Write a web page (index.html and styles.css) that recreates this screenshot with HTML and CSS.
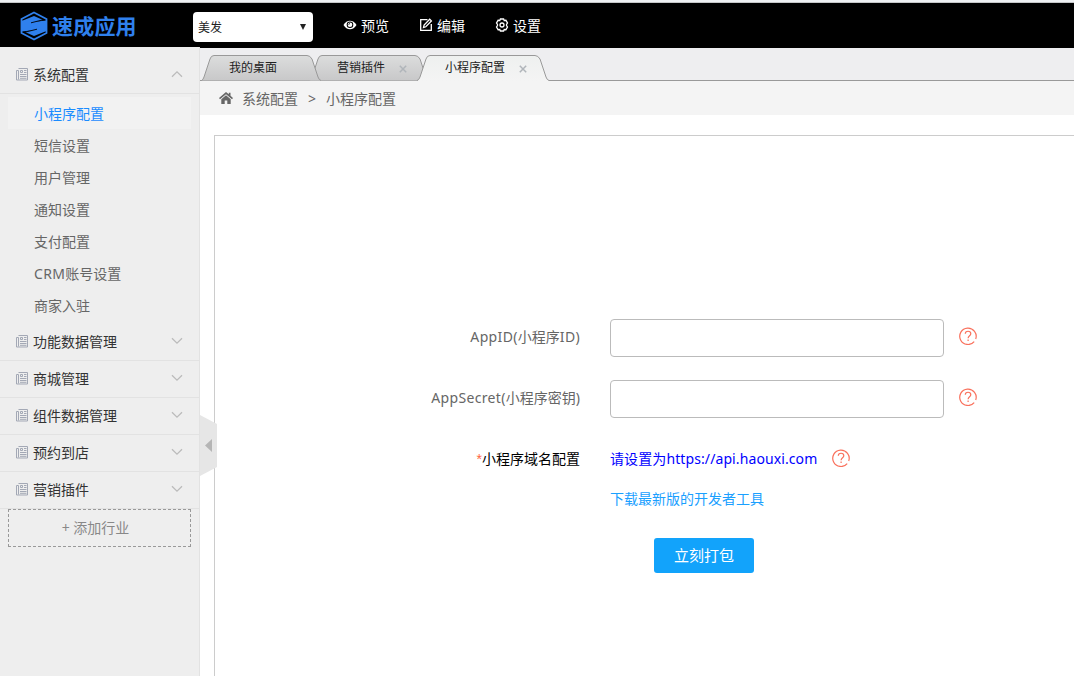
FILE: index.html
```html
<!DOCTYPE html>
<html lang="zh-CN">
<head>
  <meta charset="UTF-8">
  <meta name="viewport" content="width=device-width, initial-scale=1.0">
  <title>速成应用 - 小程序配置</title>
  <link rel="stylesheet" href="styles.css">
</head>
<body>

  <!-- 公用图标 -->
  <svg class="defs" width="0" height="0">
    <symbol id="icon-news" viewBox="0 0 13 13">
      <path d="M3.5.5h9v11.500h-11v-9.500h2M3.500 2.500v9" />
      <path d="M5.500 2.500h2v2h-2zM9 2.500h2.500M9 4.500h2.500M5 6.500h6.500M5 8.500h6.500M5 10.300h6.500" />
    </symbol>
    <symbol id="icon-down" viewBox="0 0 12 8">
      <path d="M1 1.200l5 5 5-5" />
    </symbol>
    <symbol id="icon-help" viewBox="0 0 18 18">
      <path d="M15.200 14.600A8.200 8.200 0 1 1 16.700 12M14.200 15.400a8.200 8.200 0 0 1-1.200.8" />
      <path d="M6.300 6.800c0-3.400 5.500-3.400 5.500 0 0 2-2.700 2-2.700 4.500M9.100 12.600v1.300" />
    </symbol>
  </svg>

  <!-- 顶部 -->
  <div class="header">
    <div class="logo">
      <svg width="28" height="30" viewBox="0 0 28 30">
        <path d="M14 1.500L26.500 8v14L14 28.500 1.500 22V8z" fill="none" stroke="#2f80ed" stroke-width="1.800"/>
        <path d="M1.500 10L14 5l9 4-11 3 8 5.500-4.500 1.500L1.500 20.500z" fill="#2f80ed"/>
        <path d="M26.500 20L14 25l-9-4 11-3-8-5.500 4.500-1.500 14-1.500z" fill="#2f80ed"/>
        <path d="M11 11.800l12-3M17 18.200l-12 3" stroke="#000" stroke-width=".9"/>
      </svg>
      <span>速成应用</span>
    </div>
    <div class="select"><span>美发</span><i></i></div>
    <div class="nav">
      <a class="nav-item">
        <svg width="14" height="12" viewBox="0 0 14 12">
          <path d="M.5 6C3.500.3 10.500.3 13.500 6 10.500 11.700 3.500 11.700.5 6z" fill="#fff"/>
          <circle cx="7" cy="5.800" r="3.300" fill="#000"/>
          <circle cx="7" cy="5.800" r="2.300" fill="#fff"/>
          <path d="M5.700 5.800A1.300 1.300 0 0 1 7 4.500" fill="none" stroke="#000" stroke-width=".8"/>
        </svg>
        <span>预览</span>
      </a>
      <a class="nav-item nav-edit">
        <svg width="14" height="14" viewBox="0 0 14 14" fill="none" stroke="#fff" stroke-width="1.300">
          <path d="M8.500 1.700H1.700v10.600h10.600V6"/>
          <path d="M4.500 9.500l.6-2.500 5.600-5.800 1.700 1.700L6.800 8.800z"/>
        </svg>
        <span>编辑</span>
      </a>
      <a class="nav-item">
        <svg width="14" height="14" viewBox="0 0 14 14" fill="none" stroke="#fff" stroke-width="1.300">
          <path d="M5.400 1h3.200l.6 1.500 1.700-.2 1.600 2.700-1 1.500v1l1 1.500-1.600 2.700-1.700-.2L8.600 13H5.400l-.6-1.500-1.700.2L1.500 9l1-1.500v-1L1.500 5l1.600-2.700 1.700.2z"/>
          <circle cx="7" cy="7" r="2"/>
        </svg>
        <span>设置</span>
      </a>
    </div>
  </div>

  <div class="wrap">
    <!-- 左侧菜单 -->
    <div class="sidebar">
      <div class="menu-title">
        <svg class="news"><use href="#icon-news"/></svg><span>系统配置</span>
        <svg class="arrow up"><use href="#icon-down"/></svg>
      </div>
      <ul class="submenu">
        <li class="active">小程序配置</li>
        <li>短信设置</li>
        <li>用户管理</li>
        <li>通知设置</li>
        <li>支付配置</li>
        <li><span class="latin">CRM</span>账号设置</li>
        <li>商家入驻</li>
      </ul>
      <div class="menu-title">
        <svg class="news"><use href="#icon-news"/></svg><span>功能数据管理</span>
        <svg class="arrow"><use href="#icon-down"/></svg>
      </div>
      <div class="menu-title">
        <svg class="news"><use href="#icon-news"/></svg><span>商城管理</span>
        <svg class="arrow"><use href="#icon-down"/></svg>
      </div>
      <div class="menu-title">
        <svg class="news"><use href="#icon-news"/></svg><span>组件数据管理</span>
        <svg class="arrow"><use href="#icon-down"/></svg>
      </div>
      <div class="menu-title">
        <svg class="news"><use href="#icon-news"/></svg><span>预约到店</span>
        <svg class="arrow"><use href="#icon-down"/></svg>
      </div>
      <div class="menu-title">
        <svg class="news"><use href="#icon-news"/></svg><span>营销插件</span>
        <svg class="arrow"><use href="#icon-down"/></svg>
      </div>
      <div class="add">+ 添加行业</div>
      <svg class="toggle" width="18" height="62" viewBox="0 0 18 62">
        <path d="M0 0l17 9v43L0 61z" fill="#e6e6e6"/>
        <path d="M12 24v13l-7-6.500z" fill="#b5b5b5"/>
      </svg>
    </div>

    <!-- 右侧内容 -->
    <div class="main">
      <div class="tabs">
        <div class="tab tab-home">
          <svg class="tab-bg" width="120" height="26" viewBox="0 0 120 26">
            <linearGradient id="gray" x1="0" y1="0" x2="0" y2="1">
              <stop offset="0" stop-color="#dcdddd"/><stop offset="1" stop-color="#c8c8c9"/>
            </linearGradient>
            <path d="M.5 25.500Q2 25 3 22L9 4Q10 .5 13 .5H106Q109 .5 111 4L117 22Q118 25 120 25.500" fill="url(#gray)" stroke="#999"/>
          </svg>
          <span>我的桌面</span>
        </div>
        <div class="tab tab-plugin">
          <svg class="tab-bg" width="120" height="26" viewBox="0 0 120 26">
            <path d="M.5 25.500Q2 25 3 22L9 4Q10 .5 13 .5H106Q109 .5 111 4L117 22Q118 25 120 25.500" fill="url(#gray)" stroke="#999"/>
          </svg>
          <span>营销插件</span>
          <svg class="close" width="8" height="8" viewBox="0 0 8 8"><path d="M.8.8l6.400 6.400M7.200.8L.8 7.200"/></svg>
        </div>
        <div class="tab tab-current">
          <svg class="tab-bg" width="132" height="26" viewBox="0 0 132 26">
            <linearGradient id="light" x1="0" y1="0" x2="0" y2="1">
              <stop offset="0" stop-color="#eef0ef"/><stop offset="1" stop-color="#f4f4f4"/>
            </linearGradient>
            <path d="M0 26.500Q2 25 3 22L9 4Q10 .5 13 .5H118Q121 .5 123 4L129 22Q130 25 132 25.500V26.500z" fill="url(#light)"/>
            <path d="M0 25.500Q2 25 3 22L9 4Q10 .5 13 .5H118Q121 .5 123 4L129 22Q130 25 132 25.500" fill="none" stroke="#999"/>
          </svg>
          <span>小程序配置</span>
          <svg class="close" width="8" height="8" viewBox="0 0 8 8"><path d="M.8.8l6.400 6.400M7.200.8L.8 7.200"/></svg>
        </div>
      </div>

      <div class="crumbs">
        <svg width="14" height="12" viewBox="0 0 14 12" fill="#666">
          <path d="M7 0L0 6l1 1.200 6-5 6 5L14 6l-2.500-2.200V.8H9.800v1.500z"/>
          <path d="M7 3.300L2.300 7.200V12h3.400V8.500h2.600V12h3.400V7.200z"/>
        </svg>
        <span>系统配置</span><span class="sep">&gt;</span><span>小程序配置</span>
      </div>

      <div class="panel">
        <div class="row">
          <label for="appid"><span class="latin">AppID(</span>小程序<span class="latin">ID)</span></label>
          <input type="text" id="appid">
          <svg class="help"><use href="#icon-help"/></svg>
        </div>
        <div class="row">
          <label for="secret"><span class="latin">AppSecret(</span>小程序密钥)</label>
          <input type="text" id="secret">
          <svg class="help"><use href="#icon-help"/></svg>
        </div>
        <div class="row row-domain">
          <label><em>*</em>小程序域名配置</label>
          <span class="domain">请设置为https://api.haouxi.com</span>
          <svg class="help"><use href="#icon-help"/></svg>
        </div>
        <a class="download">下载最新版的开发者工具</a>
        <button class="submit">立刻打包</button>
      </div>
    </div>
  </div>

</body>
</html>
```
FILE: styles.css
```css
* {
  box-sizing: border-box;
}

body {
  margin: 0;
  height: 676px;
  overflow: hidden;
  font-family: "Noto Sans", "Noto Sans CJK SC", sans-serif;
  font-size: 14px;
  line-height: 20px;
  color: #666;
  background: #fff;
}

svg {
  flex: none;
}

.defs {
  position: absolute;
}

.latin {
  letter-spacing: 0.35px;
}

/* 顶部 */
.header {
  display: flex;
  align-items: flex-start;
  height: 48px;
  background: #000;
  border-top: 2px solid #eef0f3;
  box-shadow: inset 0 1px 0 #c4c6c8;
}

.logo {
  display: flex;
  align-items: center;
  width: 193px;
  height: 48px;
  padding-left: 20px;
  color: #2f80ed;
  font-size: 21px;
  font-weight: 700;
  letter-spacing: 0.2px;
}

.logo span {
  margin-left: 4px;
}

.select {
  display: flex;
  align-items: center;
  justify-content: space-between;
  width: 120px;
  height: 30px;
  margin-top: 10px;
  padding: 1px 7px 0 5px;
  border-radius: 4px;
  background: #fff;
  color: #222;
  font-size: 12px;
}

.select i {
  margin-top: -2px;
  border: 3px solid transparent;
  border-top: 6px solid #222;
  border-bottom: 0;
}

.nav {
  display: flex;
  gap: 30px;
  margin: 14px 0 0 30px;
  color: #fff;
}

.nav-item {
  display: flex;
  align-items: center;
  gap: 4px;
}

.nav-item svg {
  margin-top: -2px;
}

.wrap {
  display: flex;
  height: 628px;
}

/* 左侧菜单 */
.sidebar {
  position: relative;
  flex: none;
  width: 200px;
  height: 629px;
  margin-top: -1px;
  padding-top: 10px;
  background: #eee;
  border-right: 1px solid #e2e2e2;
}

.menu-title {
  display: flex;
  align-items: center;
  height: 37px;
  padding: 0 16px 0 15px;
  border-bottom: 1px solid #e2e2e2;
  color: #333;
}

.news {
  width: 13px;
  height: 13px;
  margin: -2px 5px 0 0;
  fill: none;
  stroke: #a3a8b5;
}

.arrow {
  width: 12px;
  height: 8px;
  margin: -3px 0 0 auto;
  fill: none;
  stroke: #bbb;
  stroke-width: 1.3;
}

.arrow.up {
  transform: rotate(180deg);
}

.submenu {
  list-style: none;
  margin: 0;
  padding: 3px 8px;
}

.submenu li {
  height: 32px;
  padding: 1px 0 0 26px;
  line-height: 32px;
}

.submenu .active {
  background: #f2f2f2;
  color: #1a8cff;
}

.add {
  height: 38px;
  margin: 0 8px;
  padding-right: 8px;
  border: 1px dashed #999;
  line-height: 36px;
  text-align: center;
  color: #888;
}

.toggle {
  position: absolute;
  left: 200px;
  top: 368px;
}

/* 标签页 */
.main {
  flex: 1;
  min-width: 0;
}

.tabs {
  display: flex;
  align-items: flex-end;
  height: 33px;
  padding-left: 1px;
  background: linear-gradient(#999, #999) 0 100% / 100% 1px no-repeat #eeeef0;
}

.tab {
  position: relative;
  display: flex;
  align-items: center;
  width: 120px;
  height: 26px;
  padding-left: 28px;
  font-size: 12px;
  color: #222;
}

.tab span {
  position: relative;
}

.tab-bg {
  position: absolute;
  left: 0;
  top: 0;
}

.tab-home {
  z-index: 2;
}

.tab-plugin {
  z-index: 1;
  margin-left: -12px;
}

.tab-current {
  z-index: 3;
  width: 132px;
  margin-left: -12px;
}

.close {
  position: relative;
  margin: 1px 0 0 14px;
  stroke: #b0b5ba;
  stroke-width: 1.5;
}

.crumbs {
  display: flex;
  align-items: center;
  height: 34px;
  padding: 2px 0 0 19px;
  background: #f4f4f4;
}

.crumbs svg {
  margin: -2px 9px 0 0;
}

.crumbs .sep {
  width: 28px;
  text-align: center;
}

/* 表单 */
.panel {
  height: 560px;
  margin: 20px 0 0 14px;
  padding-top: 183px;
  border: 1px solid #ccc;
  border-right: 0;
}

.row {
  display: flex;
  align-items: center;
  height: 38px;
  margin-bottom: 23px;
}

.row label {
  width: 365px;
  margin: -3px 30px 0 0;
  text-align: right;
}

.row input {
  width: 334px;
  height: 38px;
  padding: 0 10px;
  border: 1px solid #bbb;
  border-radius: 4px;
}

.help {
  width: 18px;
  height: 18px;
  margin: -4px 0 0 15px;
  fill: none;
  stroke: #f9705c;
  stroke-width: 1.2;
}

.row-domain {
  margin-bottom: 10px;
}

.row-domain label {
  color: #000;
}

.row em {
  font-family: "Liberation Sans", sans-serif;
  font-style: normal;
  color: #f64;
}

.domain {
  margin-top: -3px;
  letter-spacing: 0.1px;
  color: #00f;
}

.download {
  display: block;
  width: 154px;
  margin-left: 395px;
  white-space: nowrap;
  color: #1aa0ff;
}

.submit {
  display: block;
  width: 100px;
  height: 35px;
  margin: 29px 0 0 439px;
  padding: 0 0 2px;
  border: 0;
  border-radius: 3px;
  background: #12a3fb;
  color: #fff;
  font: 15px "Noto Sans CJK SC", sans-serif;
}
```
